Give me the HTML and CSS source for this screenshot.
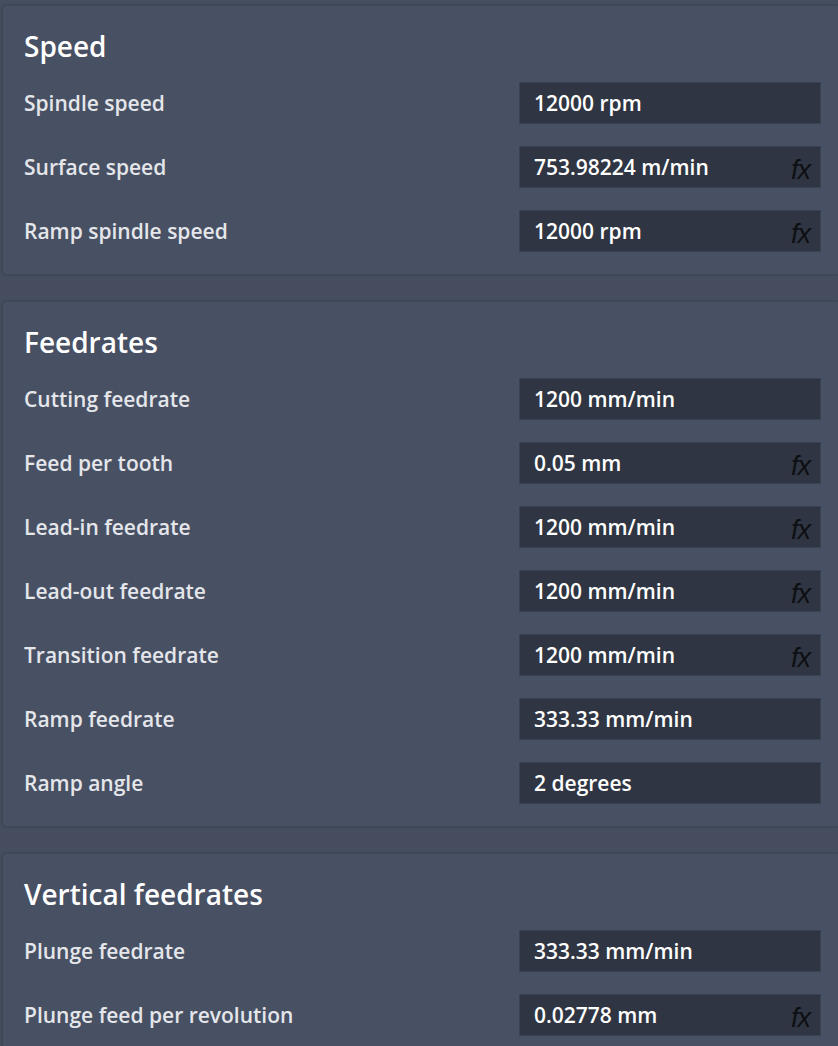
FILE: index.html
```html
<!DOCTYPE html>
<html lang="en">

<head>
    <meta charset="UTF-8">
    <meta name="viewport" content="width=device-width, initial-scale=1.0">
    <title>Feeds and speeds</title>
    <link rel="stylesheet" href="styles.css">
</head>

<body>
    <div class="panel">
        <section class="group">
            <h2>Speed</h2>
            <div class="rows">
                <div class="row"><label>Spindle speed</label><div class="field"><span>12000 rpm</span></div></div>
                <div class="row"><label>Surface speed</label><div class="field"><span>753.98224 m/min</span><span class="fx">fx</span></div></div>
                <div class="row"><label>Ramp spindle speed</label><div class="field"><span>12000 rpm</span><span class="fx">fx</span></div></div>
            </div>
        </section>

        <section class="group">
            <h2>Feedrates</h2>
            <div class="rows">
                <div class="row"><label>Cutting feedrate</label><div class="field"><span>1200 mm/min</span></div></div>
                <div class="row"><label>Feed per tooth</label><div class="field"><span>0.05 mm</span><span class="fx">fx</span></div></div>
                <div class="row"><label>Lead-in feedrate</label><div class="field"><span>1200 mm/min</span><span class="fx">fx</span></div></div>
                <div class="row"><label>Lead-out feedrate</label><div class="field"><span>1200 mm/min</span><span class="fx">fx</span></div></div>
                <div class="row"><label>Transition feedrate</label><div class="field"><span>1200 mm/min</span><span class="fx">fx</span></div></div>
                <div class="row"><label>Ramp feedrate</label><div class="field"><span>333.33 mm/min</span></div></div>
                <div class="row"><label>Ramp angle</label><div class="field"><span>2 degrees</span></div></div>
            </div>
        </section>

        <section class="group">
            <h2>Vertical feedrates</h2>
            <div class="rows">
                <div class="row"><label>Plunge feedrate</label><div class="field"><span>333.33 mm/min</span></div></div>
                <div class="row"><label>Plunge feed per revolution</label><div class="field"><span>0.02778 mm</span><span class="fx">fx</span></div></div>
            </div>
        </section>
    </div>
</body>

</html>
```

FILE: styles.css
```css
body,
html {
    margin: 0;
    padding: 0;
    background: #454d5e;
    color: #fff;
    font-family: 'Open Sans', sans-serif;
}

.panel {
    padding: 6px 0 0 3px;
}

.group {
    background: #485064;
    border-radius: 3px 0 0 3px;
    box-shadow: 0 0 3px rgba(0, 0, 0, 0.3);
    padding: 24px 17px 22px 21px;
    margin-bottom: 28px;
}

h2 {
    margin: 0 0 20px;
    font-size: 28px;
    line-height: 32px;
    font-weight: 600;
}

.rows {
    display: flex;
    flex-direction: column;
    gap: 22px;
}

.row {
    display: flex;
    align-items: center;
    justify-content: space-between;
    height: 42px;
}

label {
    font-size: 21px;
    font-weight: 600;
    color: #e4e6ea;
}

.field {
    box-sizing: border-box;
    width: 302px;
    height: 42px;
    padding: 0 10px 0 14px;
    display: flex;
    align-items: center;
    justify-content: space-between;
    background: #2f3542;
    border: 1px solid #3b4252;
    font-size: 21px;
    font-weight: 600;
}

.fx {
    font-family: 'Liberation Sans', sans-serif;
    font-style: italic;
    font-weight: normal;
    font-size: 27px;
    line-height: 1;
    letter-spacing: -1px;
    color: #0d0f12;
    padding-top: 6px;
}
```
